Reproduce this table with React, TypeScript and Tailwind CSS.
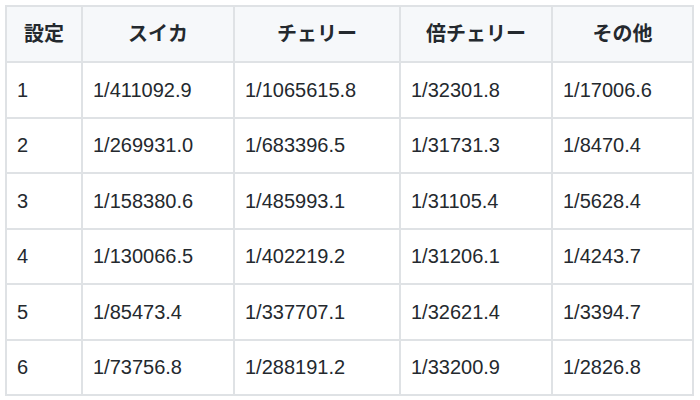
const headers = ['設定', 'スイカ', 'チェリー', '倍チェリー', 'その他']

const rows = [
  ['1', '1/411092.9', '1/1065615.8', '1/32301.8', '1/17006.6'],
  ['2', '1/269931.0', '1/683396.5', '1/31731.3', '1/8470.4'],
  ['3', '1/158380.6', '1/485993.1', '1/31105.4', '1/5628.4'],
  ['4', '1/130066.5', '1/402219.2', '1/31206.1', '1/4243.7'],
  ['5', '1/85473.4', '1/337707.1', '1/32621.4', '1/3394.7'],
  ['6', '1/73756.8', '1/288191.2', '1/33200.9', '1/2826.8'],
]

export default function App() {
  return (
    <div className="h-[400px] w-[700px] bg-white pl-[5px] pt-[5px] font-['Liberation_Sans','Noto_Sans_CJK_JP',sans-serif] text-[#24292e]">
      <table className="w-[687px] table-fixed border-collapse text-[20px]">
        <colgroup>
          <col className="w-[76px]" />
          <col className="w-[152px]" />
          <col className="w-[166px]" />
          <col className="w-[152px]" />
          <col className="w-[141px]" />
        </colgroup>
        <thead>
          <tr className="h-[56px] bg-[#f6f8fa]">
            {headers.map((h) => (
              <th key={h} className="border-2 border-[#dfe2e5] px-[10px] text-center font-bold">
                {h}
              </th>
            ))}
          </tr>
        </thead>
        <tbody>
          {rows.map((r) => (
            <tr key={r[0]} className="h-[55.5px]">
              {r.map((c, i) => (
                <td key={i} className="border-2 border-[#dfe2e5] px-[10px] text-left">
                  {c}
                </td>
              ))}
            </tr>
          ))}
        </tbody>
      </table>
    </div>
  )
}
